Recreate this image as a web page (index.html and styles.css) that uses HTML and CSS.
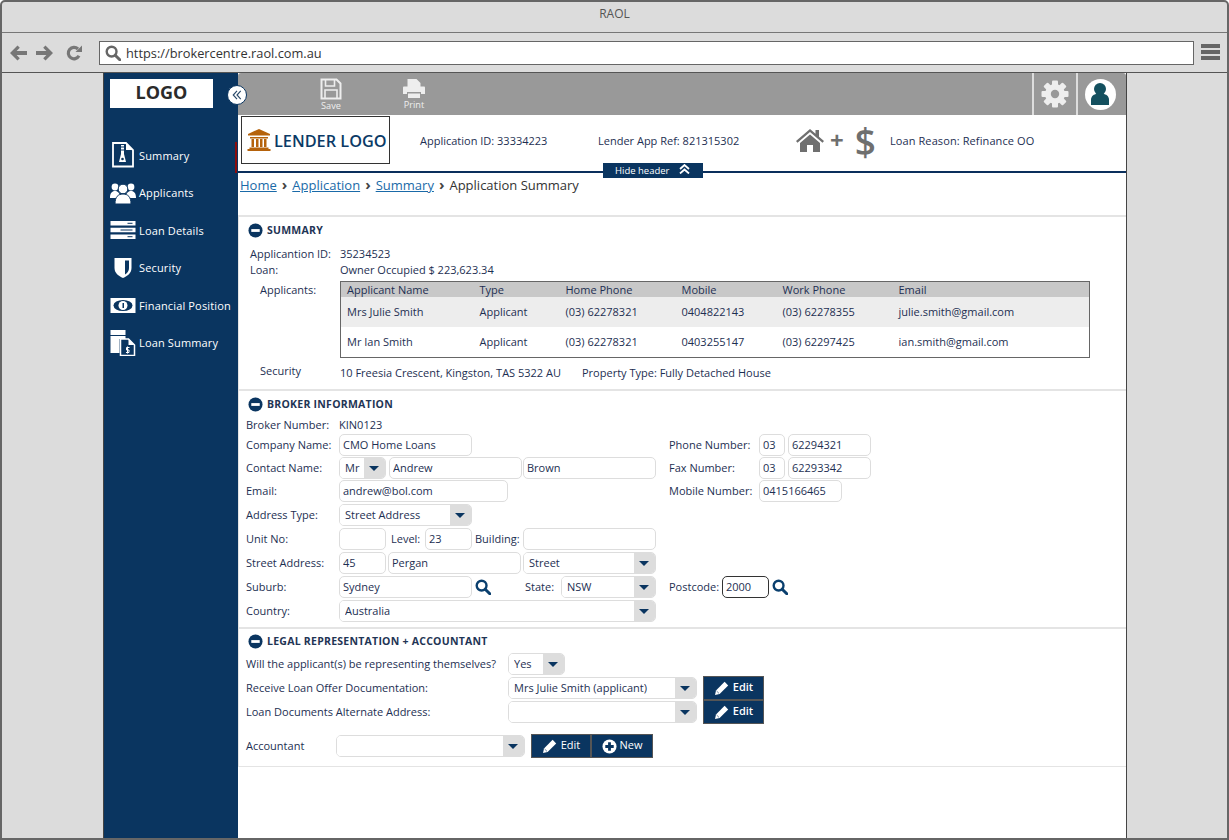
FILE: index.html
```html
<!DOCTYPE html>
<html lang="en">
<head>
    <meta charset="UTF-8">
    <title>RAOL</title>
    <link rel="stylesheet" href="styles.css">
</head>
<body>

<svg class="defs" width="0" height="0">
    <symbol id="i-minus" viewBox="0 0 16 16">
        <circle cx="8" cy="8" r="7.5" fill="#0a3560"/>
        <rect x="3.5" y="6.5" width="9" height="3" fill="#fff"/>
    </symbol>
    <symbol id="i-search" viewBox="0 0 16 16">
        <circle cx="6.6" cy="6.6" r="4.9" fill="none" stroke="currentColor" stroke-width="2.4"/>
        <path d="M10.2 10.2L14.8 14.8" stroke="currentColor" stroke-width="3" stroke-linecap="round"/>
    </symbol>
    <symbol id="i-pencil" viewBox="0 0 16 16">
        <path d="M1 15l1-4.6L10.6 1.8l3.6 3.6L5.600 14z" fill="#fff"/>
        <path d="M2.600 11l2.400 2.400" stroke="#0a3560" stroke-width=".6"/>
    </symbol>
    <symbol id="i-plus" viewBox="0 0 16 16">
        <circle cx="8" cy="8" r="7.5" fill="#fff"/>
        <path d="M3.500 6.500h3v-3h3v3h3v3h-3v3h-3v-3h-3z" fill="#0a3560"/>
    </symbol>
</svg>

<div class="window">
    <div class="titlebar">RAOL</div>

    <div class="toolbar">
        <svg class="nav-icon" width="17" height="16" viewBox="0 0 17 16"><path d="M7.500 .5L9.800 2.800 6.600 6H17v4H6.600l3.200 3.200-2.300 2.300L0 8z" fill="#777"/></svg>
        <svg class="nav-icon nav-fwd" width="17" height="16" viewBox="0 0 17 16"><path d="M9.500 .5L7.200 2.800 10.400 6H0v4h10.400l-3.200 3.200 2.300 2.300L17 8z" fill="#777"/></svg>
        <svg class="nav-icon nav-reload" width="16" height="16" viewBox="0 0 16 16"><path d="M13 10.800A5.700 5.700 0 1 1 12 4" fill="none" stroke="#777" stroke-width="3.200"/><path d="M9.500 7H16V.5z" fill="#777"/></svg>
        <div class="urlbar">
            <svg class="url-search" width="16" height="16"><use href="#i-search"/></svg>
            <span>https://brokercentre.raol.com.au</span>
        </div>
        <div class="burger"><i></i><i></i><i></i></div>
    </div>

    <div class="stage">
        <nav class="sidebar">
            <div class="logo">LOGO</div>
            <ul class="side-menu">
                <li>
                    <svg width="24" height="26" viewBox="0 0 24 26"><path d="M2 1h13l7 7v16.500H2z" fill="none" stroke="#fff" stroke-width="1.800"/><path d="M15 1v7h7z" fill="#fff"/><path d="M10 3h3v9l2 8h-7l2-8z" fill="#fff"/><circle cx="11.500" cy="17" r="1.300" fill="#0a3560"/><path d="M10 5h3M10 8h3" stroke="#0a3560"/></svg>
                    Summary
                </li>
                <li>
                    <svg width="26" height="24" viewBox="0 0 26 24"><circle cx="5" cy="6" r="3.400" fill="#fff"/><circle cx="21" cy="6" r="3.400" fill="#fff"/><path d="M0 17c0-5 2-7 5-7s5 2 5 7zM16 17c0-5 2-7 5-7s5 2 5 7z" fill="#fff"/><circle cx="13" cy="8" r="4.800" fill="#fff" stroke="#0a3560"/><path d="M5 23c0-7 3-10 8-10s8 3 8 10z" fill="#fff" stroke="#0a3560"/></svg>
                    Applicants
                </li>
                <li>
                    <svg width="25" height="18" viewBox="0 0 25 18"><path d="M0 0h25v4.500H0zM0 6.700h25v4.500H0zM0 13.500h25V18H0z" fill="#fff"/><path d="M17 2.300h5M10 9h12M17 15.700h5" stroke="#0a3560" stroke-width="1"/></svg>
                    Loan Details
                </li>
                <li>
                    <svg width="25" height="22" viewBox="0 0 25 22"><path d="M4 1h17v10c0 5-4 8-8.500 10C8 19 4 16 4 11z" fill="#fff"/><path d="M14.500 3.500h4v7.500c0 3-1.500 5-4 6.500z" fill="#0a3560"/></svg>
                    Security
                </li>
                <li>
                    <svg width="25" height="17" viewBox="0 0 25 17"><path d="M0 1h25v15H0z" fill="#fff"/><ellipse cx="12.500" cy="8.500" rx="9.500" ry="5.500" fill="#0a3560"/><circle cx="12.500" cy="8.500" r="4.500" fill="#fff"/><path d="M12 6h1.500v5H12z" fill="#0a3560"/></svg>
                    Financial Position
                </li>
                <li>
                    <svg width="25" height="26" viewBox="0 0 25 26"><path d="M0 0h15v5H0zM0 6h15v3H9v14H0z" fill="#fff"/><path d="M10 9h8l6 6v10.500H10z" fill="#0a3560" stroke="#fff" stroke-width="1.500"/><path d="M18 9v6h6z" fill="#fff"/><path d="M19 17.500h-3v2.500h2.500v2.500h-3M17 16.500v7" fill="none" stroke="#fff"/></svg>
                    Loan Summary
                </li>
            </ul>
        </nav>

        <main class="panel">
            <div class="collapse-btn">
                <svg width="10" height="10" viewBox="0 0 12 12"><path d="M6 1L1.500 6 6 11M10.500 1L6 6l4.500 5" fill="none" stroke="#2a4a6a" stroke-width="1.400"/></svg>
            </div>
            <div class="red-mark"></div>

            <div class="topbar">
                <div class="top-action top-save">
                    <svg width="22" height="22" viewBox="0 0 22 22"><path d="M1.500 1.500h15l4 4v15h-19z" fill="none" stroke="#eee" stroke-width="2"/><path d="M5.500 2v6h9V2M5 20v-8h12v8" fill="none" stroke="#eee" stroke-width="1.600"/></svg>
                    <span>Save</span>
                </div>
                <div class="top-action top-print">
                    <svg width="24" height="21" viewBox="0 0 24 21"><path d="M5.500 9V1h9l4 4v4z" fill="#eee"/><path d="M1 9.500c0-.5.500-1 1-1h20c.5 0 1 .5 1 1V16h-4v-2H5v2H1z" fill="#eee"/><path d="M6 15.500h12V20H6z" fill="#eee"/></svg>
                    <span>Print</span>
                </div>
                <div class="top-tool">
                    <svg width="28" height="28" viewBox="0 0 28 28">
                        <g fill="#eee">
                            <rect x="11" y=".5" width="6" height="27" rx="1"/>
                            <rect x="11" y=".5" width="6" height="27" rx="1" transform="rotate(45 14 14)"/>
                            <rect x="11" y=".5" width="6" height="27" rx="1" transform="rotate(90 14 14)"/>
                            <rect x="11" y=".5" width="6" height="27" rx="1" transform="rotate(135 14 14)"/>
                            <circle cx="14" cy="14" r="10"/>
                        </g>
                        <circle cx="14" cy="14" r="4.200" fill="#999"/>
                    </svg>
                </div>
                <div class="top-tool top-user">
                    <div class="avatar">
                        <svg width="20" height="24" viewBox="0 0 20 24"><circle cx="10" cy="7" r="6" fill="#14505f"/><path d="M1 23v-5c0-4 3-6 6-6h6c3 0 6 2 6 6v5z" fill="#14505f"/></svg>
                    </div>
                </div>
            </div>

            <header class="app-header">
                <div class="lender-logo">
                    <svg width="24" height="22" viewBox="0 0 24 22"><path d="M12 0l11 5v1.500H1V5z" fill="#b5620b"/><path d="M3 8h18v1.500H3zM4.500 10h2.500v8H4.500zM9 10h2.500v8H9zM13 10h2.500v8H13zM17 10h2.500v8H17zM2.500 18.500h19V20h-19zM.5 20h23v2H.5z" fill="#b5620b"/></svg>
                    <span>LENDER LOGO</span>
                </div>
                <span class="head-app">Application ID: 33334223</span>
                <span class="head-ref">Lender App Ref: 821315302</span>
                <svg class="head-house" width="28" height="24" viewBox="0 0 28 24"><path d="M14 1L0 13l1.500 1.700L14 4l12.500 10.700L28 13l-5-4.300V2h-3.500v3.700z" fill="#6f6f6f"/><path d="M4 15L14 6.500 24 15v9h-7v-7h-6v7H4z" fill="#6f6f6f"/></svg>
                <span class="head-plus">+</span>
                <span class="head-dollar">$</span>
                <span class="head-reason">Loan Reason: Refinance OO</span>
                <div class="hide-tab">Hide header <span class="hide-arrows">
                    <svg width="11" height="10" viewBox="0 0 11 10"><path d="M1 5l4.500-4L10 5M1 9.500l4.500-4 4.500 4" fill="none" stroke="#fff" stroke-width="1.800"/></svg>
                </span></div>
            </header>

            <div class="crumbs">
                <a href="#">Home</a><b>&rsaquo;</b><a href="#">Application</a><b>&rsaquo;</b><a href="#">Summary</a><b>&rsaquo;</b><span>Application Summary</span>
            </div>

            <section class="section summary">
                <h2 class="sec-head"><svg width="15" height="15"><use href="#i-minus"/></svg>SUMMARY</h2>
                <div class="info-row"><label>Applicantion ID:</label><span>35234523</span></div>
                <div class="info-row"><label>Loan:</label><span>Owner Occupied $ 223,623.34</span></div>
                <div class="applicants">
                    <label>Applicants:</label>
                    <table class="app-table">
                        <thead>
                            <tr><th class="col-name">Applicant Name</th><th class="col-type">Type</th><th class="col-home">Home Phone</th><th class="col-mob">Mobile</th><th class="col-work">Work Phone</th><th>Email</th></tr>
                        </thead>
                        <tbody>
                            <tr class="shaded"><td>Mrs Julie Smith</td><td>Applicant</td><td>(03) 62278321</td><td>0404822143</td><td>(03) 62278355</td><td>julie.smith@gmail.com</td></tr>
                            <tr><td>Mr Ian Smith</td><td>Applicant</td><td>(03) 62278321</td><td>0403255147</td><td>(03) 62297425</td><td>ian.smith@gmail.com</td></tr>
                        </tbody>
                    </table>
                </div>
                <div class="security-row">
                    <label>Security</label>
                    <span class="sec-addr">10 Freesia Crescent, Kingston, TAS 5322 AU</span>
                    <span>Property Type: Fully Detached House</span>
                </div>
            </section>

            <section class="section broker">
                <h2 class="sec-head"><svg width="15" height="15"><use href="#i-minus"/></svg>BROKER INFORMATION</h2>
                <div class="broker-num"><label>Broker Number:</label><span>KIN0123</span></div>

                <div class="row">
                    <div class="row-left"><label>Company Name:</label><input class="w133" value="CMO Home Loans"></div>
                    <div class="row-right"><label class="lab-r">Phone Number:</label><input class="w26" value="03"><input class="w83 ml3" value="62294321"></div>
                </div>
                <div class="row">
                    <div class="row-left"><label>Contact Name:</label>
                        <div class="sel w47"><select><option>Mr</option></select><i class="arrow"></i></div>
                        <input class="w133 ml3" value="Andrew"><input class="w133 ml1" value="Brown">
                    </div>
                    <div class="row-right"><label class="lab-r">Fax Number:</label><input class="w26" value="03"><input class="w83 ml3" value="62293342"></div>
                </div>
                <div class="row">
                    <div class="row-left"><label>Email:</label><input class="w169" value="andrew@bol.com"></div>
                    <div class="row-right"><label class="lab-r">Mobile Number:</label><input class="w83" value="0415166465"></div>
                </div>
                <div class="row gap2">
                    <div class="row-left"><label>Address Type:</label>
                        <div class="sel w133"><select><option>Street Address</option></select><i class="arrow"></i></div>
                    </div>
                </div>
                <div class="row gap2">
                    <div class="row-left"><label>Unit No:</label><input class="w47" value="">
                        <span class="lab-in lab-level">Level:</span><input class="w47" value="23">
                        <span class="lab-in lab-building">Building:</span><input class="w133" value="">
                    </div>
                </div>
                <div class="row gap2">
                    <div class="row-left"><label>Street Address:</label><input class="w47" value="45"><input class="w133 ml2" value="Pergan">
                        <div class="sel w133 ml2"><select><option>Street</option></select><i class="arrow"></i></div>
                    </div>
                </div>
                <div class="row gap2">
                    <div class="row-left"><label>Suburb:</label><input class="w133" value="Sydney">
                        <svg class="find" width="16" height="16"><use href="#i-search"/></svg>
                        <span class="lab-in lab-state">State:</span>
                        <div class="sel w95"><select><option>NSW</option></select><i class="arrow"></i></div>
                    </div>
                    <div class="row-right"><span class="lab-in lab-post">Postcode:</span><input class="w47 post" value="2000">
                        <svg class="find find-post" width="16" height="16"><use href="#i-search"/></svg>
                    </div>
                </div>
                <div class="row gap2">
                    <div class="row-left"><label>Country:</label>
                        <div class="sel w317"><select><option>Australia</option></select><i class="arrow"></i></div>
                    </div>
                </div>
            </section>

            <section class="section legal">
                <h2 class="sec-head"><svg width="15" height="15"><use href="#i-minus"/></svg>LEGAL REPRESENTATION + ACCOUNTANT</h2>
                <div class="row">
                    <label class="lab-long">Will the applicant(s) be representing themselves?</label>
                    <div class="sel w57"><select><option>Yes</option></select><i class="arrow"></i></div>
                </div>
                <div class="row gap2">
                    <label class="lab-long">Receive Loan Offer Documentation:</label>
                    <div class="sel w189"><select><option>Mrs Julie Smith (applicant)</option></select><i class="arrow"></i></div>
                    <button class="btn btn-edit strong"><svg width="16" height="16"><use href="#i-pencil"/></svg>Edit</button>
                </div>
                <div class="row gap2">
                    <label class="lab-long">Loan Documents Alternate Address:</label>
                    <div class="sel w189"><select><option></option></select><i class="arrow"></i></div>
                    <button class="btn btn-edit strong"><svg width="16" height="16"><use href="#i-pencil"/></svg>Edit</button>
                </div>
                <div class="row accountant">
                    <label class="lab-acc">Accountant</label>
                    <div class="sel w189"><select><option></option></select><i class="arrow"></i></div>
                    <button class="btn btn-edit acc-edit"><svg width="16" height="16"><use href="#i-pencil"/></svg>Edit</button>
                    <button class="btn btn-new"><svg width="15" height="15"><use href="#i-plus"/></svg>New</button>
                </div>
            </section>
        </main>
    </div>
</div>

</body>
</html>
```

FILE: styles.css
```css
* {
    box-sizing: border-box;
}

body {
    margin: 0;
    height: 840px;
    overflow: hidden;
    font-family: 'Open Sans', sans-serif;
    font-size: 11px;
    color: #1d2f52;
}

.defs {
    position: absolute;
}

.window {
    height: 840px;
    display: flex;
    flex-direction: column;
    background-color: #dcdcdc;
    border: 2px solid #666;
    border-radius: 5px 5px 0 0;
}

.titlebar {
    height: 31px;
    padding-top: 3px;
    text-align: center;
    font-size: 12px;
    color: #555;
    border-bottom: 1px solid #777;
}

.toolbar {
    height: 40px;
    display: flex;
    align-items: center;
    padding-left: 8px;
    border-bottom: 1px solid #555;
}

.nav-fwd {
    margin-left: 9px;
}

.nav-reload {
    margin-left: 13px;
}

.urlbar {
    width: 1095px;
    height: 24px;
    margin-left: 17px;
    padding-left: 5px;
    display: flex;
    align-items: center;
    gap: 5px;
    background-color: #fff;
    border: 1px solid #666;
    font-size: 12.800px;
    color: #333;
}

.url-search {
    color: #666;
}

.burger {
    margin-left: 7px;
    width: 19px;
}

.burger i {
    display: block;
    height: 4px;
    margin-bottom: 2px;
    background-color: #666;
}

.stage {
    flex: 1;
    display: flex;
    padding-left: 101px;
    min-height: 0;
}

/* left menu */
.sidebar {
    width: 135px;
    background-color: #0a3560;
    border-left: 1px solid #444;
    padding: 6px 0 0 6px;
}

.logo {
    width: 103px;
    height: 29px;
    background-color: #fff;
    color: #2b2b2b;
    text-align: center;
    font-size: 18px;
    font-weight: 700;
    line-height: 27px;
}

.side-menu {
    list-style: none;
    margin: 28.600px 0 0;
    padding: 0;
    color: #fff;
    letter-spacing: .15px;
}

.side-menu li {
    height: 37.500px;
    display: flex;
    align-items: center;
    white-space: nowrap;
}

.side-menu svg {
    width: 26px;
    margin-right: 3px;
    flex: none;
}

.panel {
    position: relative;
    width: 889px;
    background-color: #fff;
    border-right: 1px solid #444;
}

.collapse-btn {
    position: absolute;
    left: -11px;
    top: 12px;
    width: 20px;
    height: 20px;
    border-radius: 50%;
    background-color: #fff;
    border: 1px solid #0a3560;
    display: flex;
    align-items: center;
    justify-content: center;
    z-index: 2;
}

.red-mark {
    position: absolute;
    left: -3px;
    top: 69px;
    width: 2px;
    height: 31px;
    background-color: #8a0d0d;
}

/* grey action bar */
.topbar {
    height: 42px;
    display: flex;
    align-items: stretch;
    background-color: #999;
    border-radius: 3px 3px 0 0;
}

.top-action {
    display: flex;
    flex-direction: column;
    align-items: center;
    padding-top: 5px;
    font-size: 9.200px;
    color: #eee;
}

.top-save {
    margin-left: 82px;
    width: 22px;
}

.top-print {
    margin-left: 60px;
    width: 24px;
}

.top-save span {
    margin-top: -1px;
}

.top-print span {
    margin-top: -1px;
}

.top-tool {
    width: 44px;
    display: flex;
    align-items: center;
    justify-content: center;
    border-left: 2px solid #ddd;
}

.top-print + .top-tool {
    margin-left: auto;
}

.top-user {
    width: 50px;
    padding-right: 4px;
}

.avatar {
    width: 31px;
    height: 31px;
    border-radius: 50%;
    background-color: #fff;
    display: flex;
    align-items: center;
    justify-content: center;
}

/* lender header */
.app-header {
    position: relative;
    height: 58px;
    display: flex;
    align-items: center;
    border-bottom: 2px solid #0a2f5c;
    padding: 0 0 6px 3px;
}

.lender-logo {
    width: 149px;
    height: 48px;
    display: flex;
    align-items: center;
    gap: 3px;
    padding-left: 5px;
    border: 1px solid #333;
    font-size: 16.300px;
    font-weight: 600;
    color: #0b3a66;
    white-space: nowrap;
}

.lender-logo span {
    margin-top: 2px;
}

.head-app {
    margin-left: 30px;
    width: 178px;
}

.head-ref {
    width: 198px;
}

.head-plus {
    margin-left: 6px;
    font-size: 24px;
    font-weight: 700;
    color: #6f6f6f;
    line-height: 1;
}

.head-dollar {
    margin-left: 11px;
    margin-top: 3px;
    font-size: 37px;
    font-weight: 600;
    color: #6f6f6f;
    line-height: 1;
}

.head-reason {
    margin-left: 14px;
    letter-spacing: .1px;
}

.hide-tab {
    position: absolute;
    left: 365px;
    top: 48px;
    width: 100px;
    height: 15px;
    background-color: #0a3560;
    color: #fff;
    font-size: 9.500px;
    line-height: 15px;
    padding-left: 12px;
}

.hide-arrows {
    margin-left: 7px;
}

.crumbs {
    height: 42px;
    padding: 1px 0 0 2px;
    font-size: 13px;
    color: #333;
    white-space: nowrap;
}

.crumbs a {
    color: #1a6aa8;
}

.crumbs b {
    margin: 0 5px;
    font-size: 15px;
    color: #444;
}

/* sections */
.section {
    border-top: 2px solid #e4e4e4;
    border-left: 1px solid #e4e4e4;
    padding-left: 9px;
}

.sec-head {
    height: 26px;
    margin: 0;
    display: flex;
    align-items: center;
    gap: 4px;
    font-size: 10.500px;
    font-weight: 700;
    letter-spacing: .25px;
    color: #1f3555;
}

.summary {
    height: 174px;
}

.summary .sec-head {
    margin-bottom: 2px;
}

.info-row {
    height: 16px;
    display: flex;
    align-items: center;
    padding-left: 2px;
}

.info-row label {
    width: 90px;
}

.applicants {
    display: flex;
    margin-top: 4px;
    padding-left: 12px;
}

.applicants label {
    width: 80px;
    padding-top: 1px;
}

.app-table {
    width: 750px;
    border: 1px solid #666;
    border-collapse: collapse;
    table-layout: fixed;
}

.app-table th {
    height: 15px;
    padding: 0 0 0 6px;
    background-color: #c8c8c8;
    font-weight: 400;
    text-align: left;
}

.app-table td {
    height: 30px;
    padding: 0 0 0 6px;
}

.shaded td {
    padding-bottom: 2px;
    background-color: #ededed;
}

.col-name { width: 133px; }
.col-type { width: 86px; }
.col-home { width: 116px; }
.col-mob { width: 101px; }
.col-work { width: 116px; }

.security-row {
    display: flex;
    margin-top: 5px;
    padding-left: 12px;
    height: 20px;
    align-items: center;
}

.security-row label {
    width: 80px;
    margin-top: -5px;
}

.sec-addr {
    width: 242px;
}

.broker {
    height: 238px;
    padding-left: 7px;
}

.broker .sec-head {
    padding-left: 2px;
}

.broker-num {
    height: 17px;
    display: flex;
    align-items: center;
    padding-bottom: 2px;
}

.broker-num label {
    width: 93px;
}

/* form rows */
.row {
    height: 22px;
    margin-bottom: 1px;
    display: flex;
    align-items: center;
    white-space: nowrap;
}

.gap2 {
    margin-top: 2px;
    margin-bottom: 0;
}

.row label,
.lab-in {
    padding-bottom: 2px;
}

.row-left {
    width: 423px;
    display: flex;
    align-items: center;
    flex: none;
}

.row-left > label {
    width: 93px;
    flex: none;
}

.row-right {
    display: flex;
    align-items: center;
}

.lab-r {
    width: 90px;
}

input {
    height: 22px;
    padding: 0 3px 2px;
    font: inherit;
    color: inherit;
    background-color: #fff;
    border: 1px solid #ddd;
    border-radius: 5px;
    outline: none;
}

.sel {
    height: 22px;
    display: flex;
    border: 1px solid #ddd;
    border-radius: 5px;
    overflow: hidden;
    flex: none;
}

.sel select {
    flex: 1;
    min-width: 0;
    height: 20px;
    padding: 0 0 2px 5px;
    font: inherit;
    color: inherit;
    background-color: #fff;
    border: none;
    outline: none;
    appearance: none;
}

.arrow {
    width: 21px;
    flex: none;
    position: relative;
    background-color: #ddd;
}

.arrow::after {
    content: "";
    position: absolute;
    left: 5px;
    top: 8px;
    border-left: 5px solid transparent;
    border-right: 5px solid transparent;
    border-top: 5px solid #0a3560;
}

.w26 { width: 26px; }
.w47 { width: 47px; }
.w57 { width: 57px; }
.w83 { width: 83px; }
.w95 { width: 95px; }
.w133 { width: 133px; }
.w169 { width: 169px; }
.w189 { width: 189px; }
.w317 { width: 317px; }
.ml1 { margin-left: 1px; }
.ml2 { margin-left: 2px; }
.ml3 { margin-left: 3px; }

.lab-in {
    flex: none;
}

.lab-level {
    margin-left: 5px;
    width: 34px;
}

.lab-building {
    margin-left: 3px;
    width: 48px;
}

.lab-state {
    margin-left: 34px;
    width: 36px;
}

.lab-post {
    width: 53px;
}

.post {
    border-color: #333;
    padding: 0 3px 2px;
}

.find {
    margin-left: 3px;
    color: #0a3f6e;
    flex: none;
}

.legal {
    height: 140px;
    padding-left: 7px;
    border-bottom: 1px solid #e4e4e4;
}

.legal .sec-head {
    height: 24px;
    padding-left: 2px;
}

.lab-long {
    width: 262px;
    flex: none;
}

.lab-acc {
    width: 90px;
    flex: none;
}

.accountant {
    margin-top: 12px;
}

.btn {
    height: 24px;
    display: flex;
    align-items: center;
    justify-content: center;
    gap: 3px;
    padding: 0 0 3px;
    font: inherit;
    color: #fff;
    background-color: #0a3560;
    border: 1px solid #555;
}

.btn svg {
    margin-top: 3px;
}

.btn-edit {
    width: 61px;
    margin-left: 6px;
}

.acc-edit {
    width: 60px;
}

.btn-new {
    width: 62px;
}

.strong {
    font-weight: 600;
}
```
